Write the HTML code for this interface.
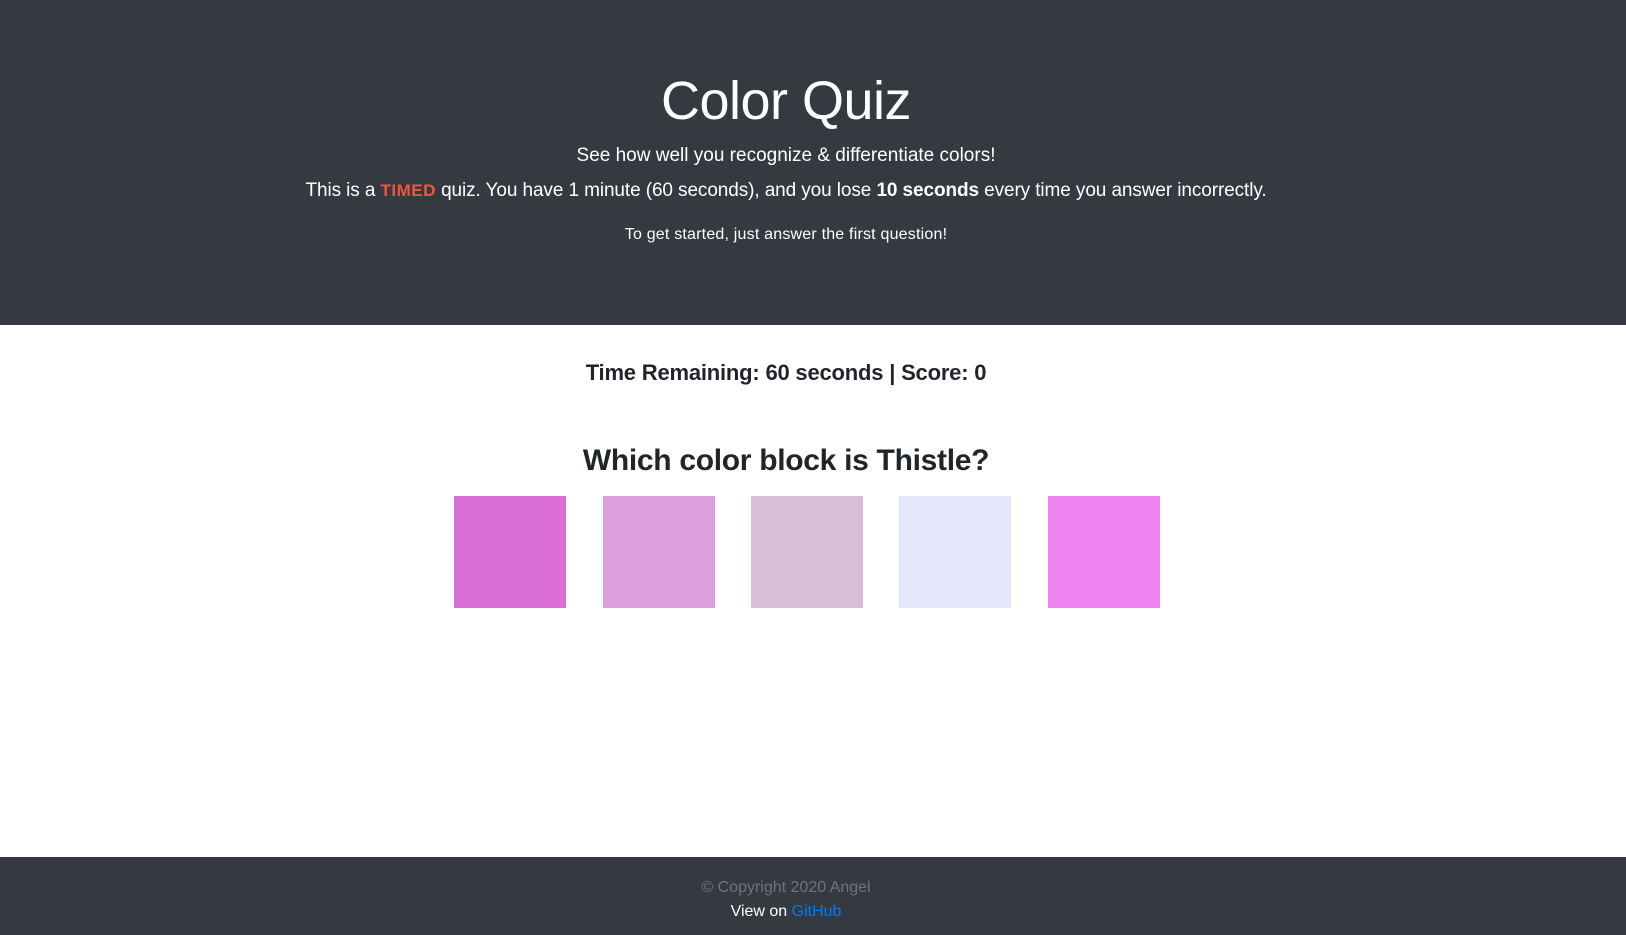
<!DOCTYPE html>
<html><head><meta charset="utf-8"><style>
*{margin:0;padding:0;box-sizing:border-box}
body{width:1626px;height:935px;font-family:"Liberation Sans",sans-serif;background:#fff;position:relative;overflow:hidden;color:#212529}
.hdr{position:absolute;left:0;top:0;width:1626px;height:325px;background:#343a40}
.c{position:absolute;left:0;width:1572px;text-align:center;white-space:nowrap}
.t1{top:70px;font-size:54px;font-weight:300;letter-spacing:-0.5px}
.t2{top:145px;font-size:19px;font-weight:300;letter-spacing:0px}
.t3{top:180px;font-size:19px;font-weight:300;letter-spacing:-0.1px}
.t3 .tm{color:#f0553f;font-weight:900;font-size:17px;letter-spacing:0.5px}
.t3 b{font-weight:700}
.t4{top:226px;font-size:16px;letter-spacing:0.2px}
.time{top:360px;font-size:22px;font-weight:700;letter-spacing:-0.2px}
.q{top:444px;font-size:30px;font-weight:700;letter-spacing:-0.3px}
.blk{position:absolute;top:496px;width:112px;height:112px}
.ftr{position:absolute;left:0;top:857px;width:1626px;height:78px;background:#343a40}
.f1{top:879px;font-size:16px;color:#6c757d}
.f2{top:903px;font-size:16px;color:#fff}
.f2 a{color:#007bff;text-decoration:none}
</style></head><body>
<div class="hdr"></div>
<div class="c t1" style="color:#fff">Color Quiz</div>
<div class="c t2" style="color:#fff">See how well you recognize &amp; differentiate colors!</div>
<div class="c t3" style="color:#fff">This is a <span class="tm">TIMED</span> quiz. You have 1 minute (60 seconds), and you lose <b>10 seconds</b> every time you answer incorrectly.</div>
<div class="c t4" style="color:#fff">To get started, just answer the first question!</div>
<div class="c time">Time Remaining: 60 seconds | Score: 0</div>
<div class="c q">Which color block is Thistle?</div>
<div class="blk" style="left:454px;background:#da70d6"></div>
<div class="blk" style="left:603px;background:#dda0dd"></div>
<div class="blk" style="left:751px;background:#d8bfd8"></div>
<div class="blk" style="left:899px;background:#e6e6fa"></div>
<div class="blk" style="left:1048px;background:#ee82ee"></div>
<div class="ftr"></div>
<div class="c f1">© Copyright 2020 Angel</div>
<div class="c f2">View on <a>GitHub</a></div>
</body></html>
